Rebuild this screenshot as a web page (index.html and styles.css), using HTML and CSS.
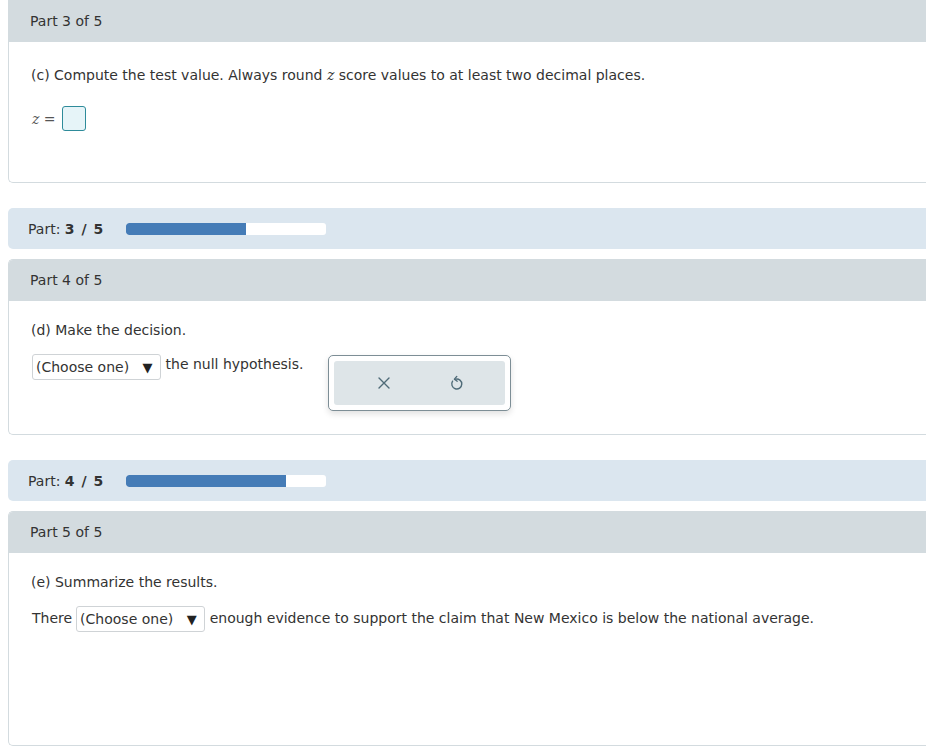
FILE: index.html
```html
<!DOCTYPE html>
<html>
<head>
<meta charset="utf-8">
<link rel="stylesheet" href="styles.css">
</head>
<body>
<div class="page">
  <section class="card card-first">
    <div class="card-head">Part 3 of 5</div>
    <div class="card-body body-c">
      <p class="q">(c) Compute the test value. Always round <i class="var">z</i> score values to at least two decimal places.</p>
      <div class="row z-row">
        <span class="zlabel"><i class="var">z</i> =</span>
        <span class="ans-box"></span>
      </div>
    </div>
  </section>

  <div class="progress">
    <span class="plabel">Part: <b>3 / 5</b></span>
    <span class="track"><span class="fill" style="width:60%"></span></span>
  </div>

  <section class="card">
    <div class="card-head">Part 4 of 5</div>
    <div class="card-body body-d">
      <p class="q">(d) Make the decision.</p>
      <div class="row">
        <span class="select">(Choose one) <span class="arrow">▼</span></span>
        <span class="txt">the null hypothesis.</span>
        <div class="tools">
          <div class="tools-inner">
            <svg class="ic" width="14" height="14" viewBox="0 0 14 14"><path d="M2 2 L12 12 M12 2 L2 12" stroke="#4f6b78" stroke-width="1.4" fill="none" stroke-linecap="round"/></svg>
            <svg class="ic" width="14" height="16" viewBox="0 0 14 16"><path d="M3.6 6.2 A5 5 0 1 0 6.6 4.1" stroke="#4f6b78" stroke-width="1.4" fill="none" stroke-linecap="round"/><path d="M7.8 1.4 L5.4 4.1 L8.2 6.2" stroke="#4f6b78" stroke-width="1.4" fill="none" stroke-linecap="round" stroke-linejoin="round"/></svg>
          </div>
        </div>
      </div>
    </div>
  </section>

  <div class="progress">
    <span class="plabel">Part: <b>4 / 5</b></span>
    <span class="track"><span class="fill" style="width:80%"></span></span>
  </div>

  <section class="card">
    <div class="card-head">Part 5 of 5</div>
    <div class="card-body body-e">
      <p class="q">(e) Summarize the results.</p>
      <div class="row">
        <span class="txt">There</span>
        <span class="select">(Choose one) <span class="arrow">▼</span></span>
        <span class="txt">enough evidence to support the claim that New Mexico is below the national average.</span>
      </div>
    </div>
  </section>
</div>
</body>
</html>
```

FILE: styles.css
```css
html, body {
  margin: 0;
  padding: 0;
  background: #ffffff;
  overflow: hidden;
}
body {
  font-family: "DejaVu Sans", Verdana, sans-serif;
  font-size: 14px;
  color: #333333;
}
.page {
  width: 940px;
  padding-left: 8px;
}
.card {
  border: 1px solid #d3dbdf;
  border-right: none;
  border-radius: 5px;
  background: #fff;
  overflow: hidden;
}
.card-first {
  border-top: none;
  border-top-left-radius: 0;
}
.card-head {
  background: #d3dbdf;
  height: 41px;
  line-height: 41px;
  padding-left: 21px;
  color: #333;
}
.card-first .card-head {
  height: 42px;
  line-height: 42px;
}
.card-body {
  padding: 0 22px;
  box-sizing: border-box;
}
.q {
  margin: 0;
  line-height: 20px;
}
.var {
  font-family: "DejaVu Serif", serif;
  font-style: italic;
}
.row {
  display: flex;
  align-items: flex-start;
}
.body-c {
  height: 140px;
  padding-top: 23px;
}
.body-c .row {
  margin-top: 21px;
  align-items: center;
}
.zlabel {
  color: #555;
  margin-left: 1px;
  margin-right: 6px;
  font-size: 14px;
}
.ans-box {
  width: 22px;
  height: 23px;
  border: 1px solid #2e8b9a;
  border-radius: 3px;
  background: #e6f4f8;
}
.body-d {
  height: 133px;
  padding-top: 19px;
}
.body-e {
  height: 192px;
  padding-top: 19px;
}
.body-d .row, .body-e .row {
  margin-top: 14px;
}
.select {
  display: inline-block;
  height: 24px;
  line-height: 25px;
  padding: 0 7px 0 3px;
  border: 1px solid #cfd3d6;
  border-radius: 3px;
  background: #fff;
  color: #333;
  white-space: nowrap;
}
.arrow {
  font-size: 13px;
  margin-left: 9px;
  color: #222;
}
.txt {
  line-height: 24px;
  margin: 0 5px;
  white-space: nowrap;
}
.body-d .select { margin-left: 1px; }
.body-d .txt { margin-left: 5px; margin-top: -2px; }
.body-e .txt:first-child { margin-left: 1px; margin-right: 4px; }
.tools {
  margin-left: 20px;
  margin-top: 1px;
  width: 171px;
  height: 44px;
  padding: 5px;
  border: 1px solid #7d8e96;
  border-radius: 5px;
  background: #fff;
  box-shadow: 0 3px 6px rgba(0,0,0,0.12);
}
.tools-inner {
  height: 100%;
  background: #dee5e8;
  border-radius: 3px;
  display: flex;
  justify-content: space-around;
  align-items: center;
  padding: 0 14px;
}
.ic { display: block; }
.progress {
  margin: 25px 0 10px 0;
  height: 41px;
  background: #dbe6ef;
  border-radius: 5px;
  display: flex;
  align-items: center;
  padding-left: 20px;
}
.plabel {
  color: #333;
  width: 98px;
}
.plabel b {
  font-weight: bold;
  word-spacing: 2px;
}
.track {
  width: 200px;
  height: 12px;
  background: #fff;
  border-radius: 3px;
  overflow: hidden;
  display: block;
}
.fill {
  display: block;
  height: 100%;
  background: #457cb7;
  border-radius: 3px 0 0 3px;
}
```
